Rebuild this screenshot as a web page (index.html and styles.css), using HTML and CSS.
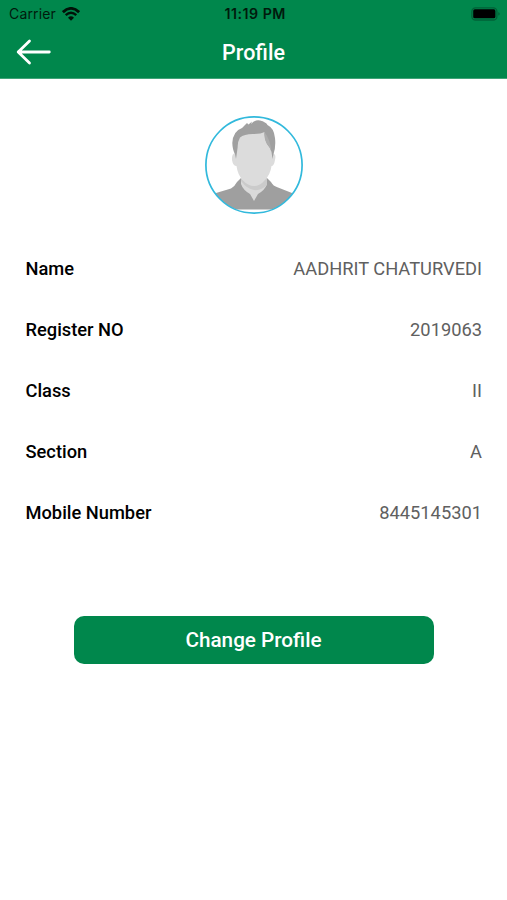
FILE: index.html
```html
<!DOCTYPE html>
<html lang="en">
<head>
    <meta charset="UTF-8">
    <meta name="viewport" content="width=device-width, initial-scale=1.0">
    <title>Profile</title>
    <link rel="stylesheet" href="styles.css">
</head>
<body>
    <header class="header">
        <div class="status-bar">
            <div class="carrier">
                <span>Carrier</span>
                <svg class="wifi" width="18" height="14" viewBox="0 0 18 14">
                    <path d="M0.9 5.2 Q9 -2.4 17.1 5.2" fill="none" stroke="#001208" stroke-width="2.8"/>
                    <path d="M3.7 8.2 Q9 3.4 14.3 8.2" fill="none" stroke="#001208" stroke-width="2.4"/>
                    <path d="M6 10.7 Q9 8 12 10.7 L9 13.8 Z" fill="#001208"/>
                </svg>
            </div>
            <div class="time">11:19 PM</div>
            <svg class="battery" width="30" height="14" viewBox="0 0 30 14">
                <rect x="0.9" y="0.8" width="25" height="12.2" rx="3.6" fill="none" stroke="#006137" stroke-width="1.3"/>
                <rect x="2.2" y="2.3" width="22.2" height="9" rx="1.6" fill="#000"/>
                <path d="M27.4 5 Q30 6.9 27.4 8.8 Z" fill="#005c33"/>
            </svg>
        </div>
        <div class="nav-bar">
            <a class="back" href="#" aria-label="Back">
                <svg width="36" height="26" viewBox="0 0 36 26">
                    <path d="M13.5 2 L2.2 13 L13.5 24 M2.2 13 H33.3" fill="none" stroke="#fff" stroke-width="2.8" stroke-linecap="round" stroke-linejoin="round"/>
                </svg>
            </a>
            <h1 class="title">Profile</h1>
        </div>
    </header>
    <main class="profile">
        <div class="avatar">
            <svg width="98" height="98" viewBox="0 0 98 98">
                <defs>
                    <clipPath id="avatarClip"><circle cx="49" cy="49" r="48"/></clipPath>
                </defs>
                <g clip-path="url(#avatarClip)">
                    <!-- shirt -->
                    <path d="M4 93.5 V81 Q7 78 11 77 L26 72.5 Q30 70 32 66 L36 62 H62 L66 66 Q68 70 73 71.5 L87 77 Q92 79 94 82 V93.5 Z" fill="#9f9f9f"/>
                    <!-- neck -->
                    <path d="M36 56 V68 Q38 74 45 78 L49 85 L53 78 Q60 74 62 68 V56 Z" fill="#dadada"/>
                    <path d="M36 62 Q43 71 62 62 V69 Q56 75 49 74 Q42 73 36 65 Z" fill="#cbcbcb"/>
                    <!-- face and ears -->
                    <path d="M31 22 L58 12 L67.5 22 V37 Q71.5 38 70 44 Q69 50 66.5 50 Q65.5 58 60 64 Q55 70 49 70 Q43 70 37.5 64 Q32.5 58 31.5 50 Q28 50 27 44 Q26.5 38 30 37 Z" fill="#dcdcdc"/>
                    <!-- hair -->
                    <path d="M31 43 L30 38 Q27.5 34 27.3 27 Q28 15 37 12 L42 7 L43.5 8.5 L47 5.5 L46 8 Q50 3.5 55 4.5 Q61 6 62.5 9 Q69 12 70 22 Q71 31 68.5 38 L67.5 43 L66.5 36 Q65 31 62 28 Q59 22 59.5 16 Q56 18 48 18 Q39 18 35 21.5 Q32.5 26 32.7 31 Z" fill="#a0a0a0"/>
                    <path d="M59.5 16 Q59 23 62 28 Q64 30 66.2 35 Q65.5 24 59.5 16 Z" fill="#adadad"/>
                </g>
                <circle cx="49" cy="49" r="48.1" fill="none" stroke="#32b9dc" stroke-width="1.7"/>
            </svg>
        </div>
        <dl class="details">
            <div class="row">
                <dt>Name</dt>
                <dd>AADHRIT CHATURVEDI</dd>
            </div>
            <div class="row">
                <dt>Register NO</dt>
                <dd>2019063</dd>
            </div>
            <div class="row">
                <dt>Class</dt>
                <dd>II</dd>
            </div>
            <div class="row">
                <dt>Section</dt>
                <dd>A</dd>
            </div>
            <div class="row">
                <dt>Mobile Number</dt>
                <dd>8445145301</dd>
            </div>
        </dl>
        <button class="change-button" type="button">Change Profile</button>
    </main>
</body>
</html>
```

FILE: styles.css
```css
* {
    box-sizing: border-box;
}
body {
    margin: 0;
    font-family: Roboto, sans-serif;
    background-color: #ffffff;
    color: #000000;
}
.header {
    height: 79px;
    background-color: #00874c;
    border-bottom: 1px solid #3fa478;
}
.status-bar {
    display: grid;
    grid-template-columns: 1fr auto 1fr;
    align-items: center;
    height: 26px;
    padding: 1px 6px 0 9px;
    font-family: Inter, sans-serif;
    font-size: 14px;
    color: #001a0c;
}
.carrier {
    display: flex;
    align-items: center;
    gap: 6px;
    letter-spacing: 0.15px;
}
.time {
    font-size: 14.2px;
    font-weight: 600;
    letter-spacing: 0.5px;
    margin-right: -0.5px;
}
.battery {
    justify-self: end;
}
.nav-bar {
    display: grid;
    grid-template-columns: 1fr auto 1fr;
    align-items: center;
    height: 52px;
    padding: 0 16px;
}
.back {
    display: flex;
}
.title {
    margin: 0;
    font-size: 21.5px;
    font-weight: 500;
    color: #ffffff;
}
.profile {
    display: flex;
    flex-direction: column;
    align-items: center;
    padding: 36.5px 25px 0;
}
.avatar {
    height: 98px;
}
.details {
    width: 100%;
    margin: 24.5px 0 0;
}
.row {
    display: flex;
    align-items: center;
    justify-content: space-between;
    height: 61px;
    font-size: 18.3px;
}
.row dt {
    font-weight: 500;
    padding-left: 0.5px;
}
.row dd {
    margin: 0;
    color: #606060;
}
.change-button {
    width: 360px;
    height: 48px;
    margin-top: 73px;
    border: none;
    border-radius: 10px;
    background-color: #00874c;
    color: #ffffff;
    font-family: Roboto, sans-serif;
    font-size: 20.7px;
    font-weight: 500;
    cursor: pointer;
}
```
